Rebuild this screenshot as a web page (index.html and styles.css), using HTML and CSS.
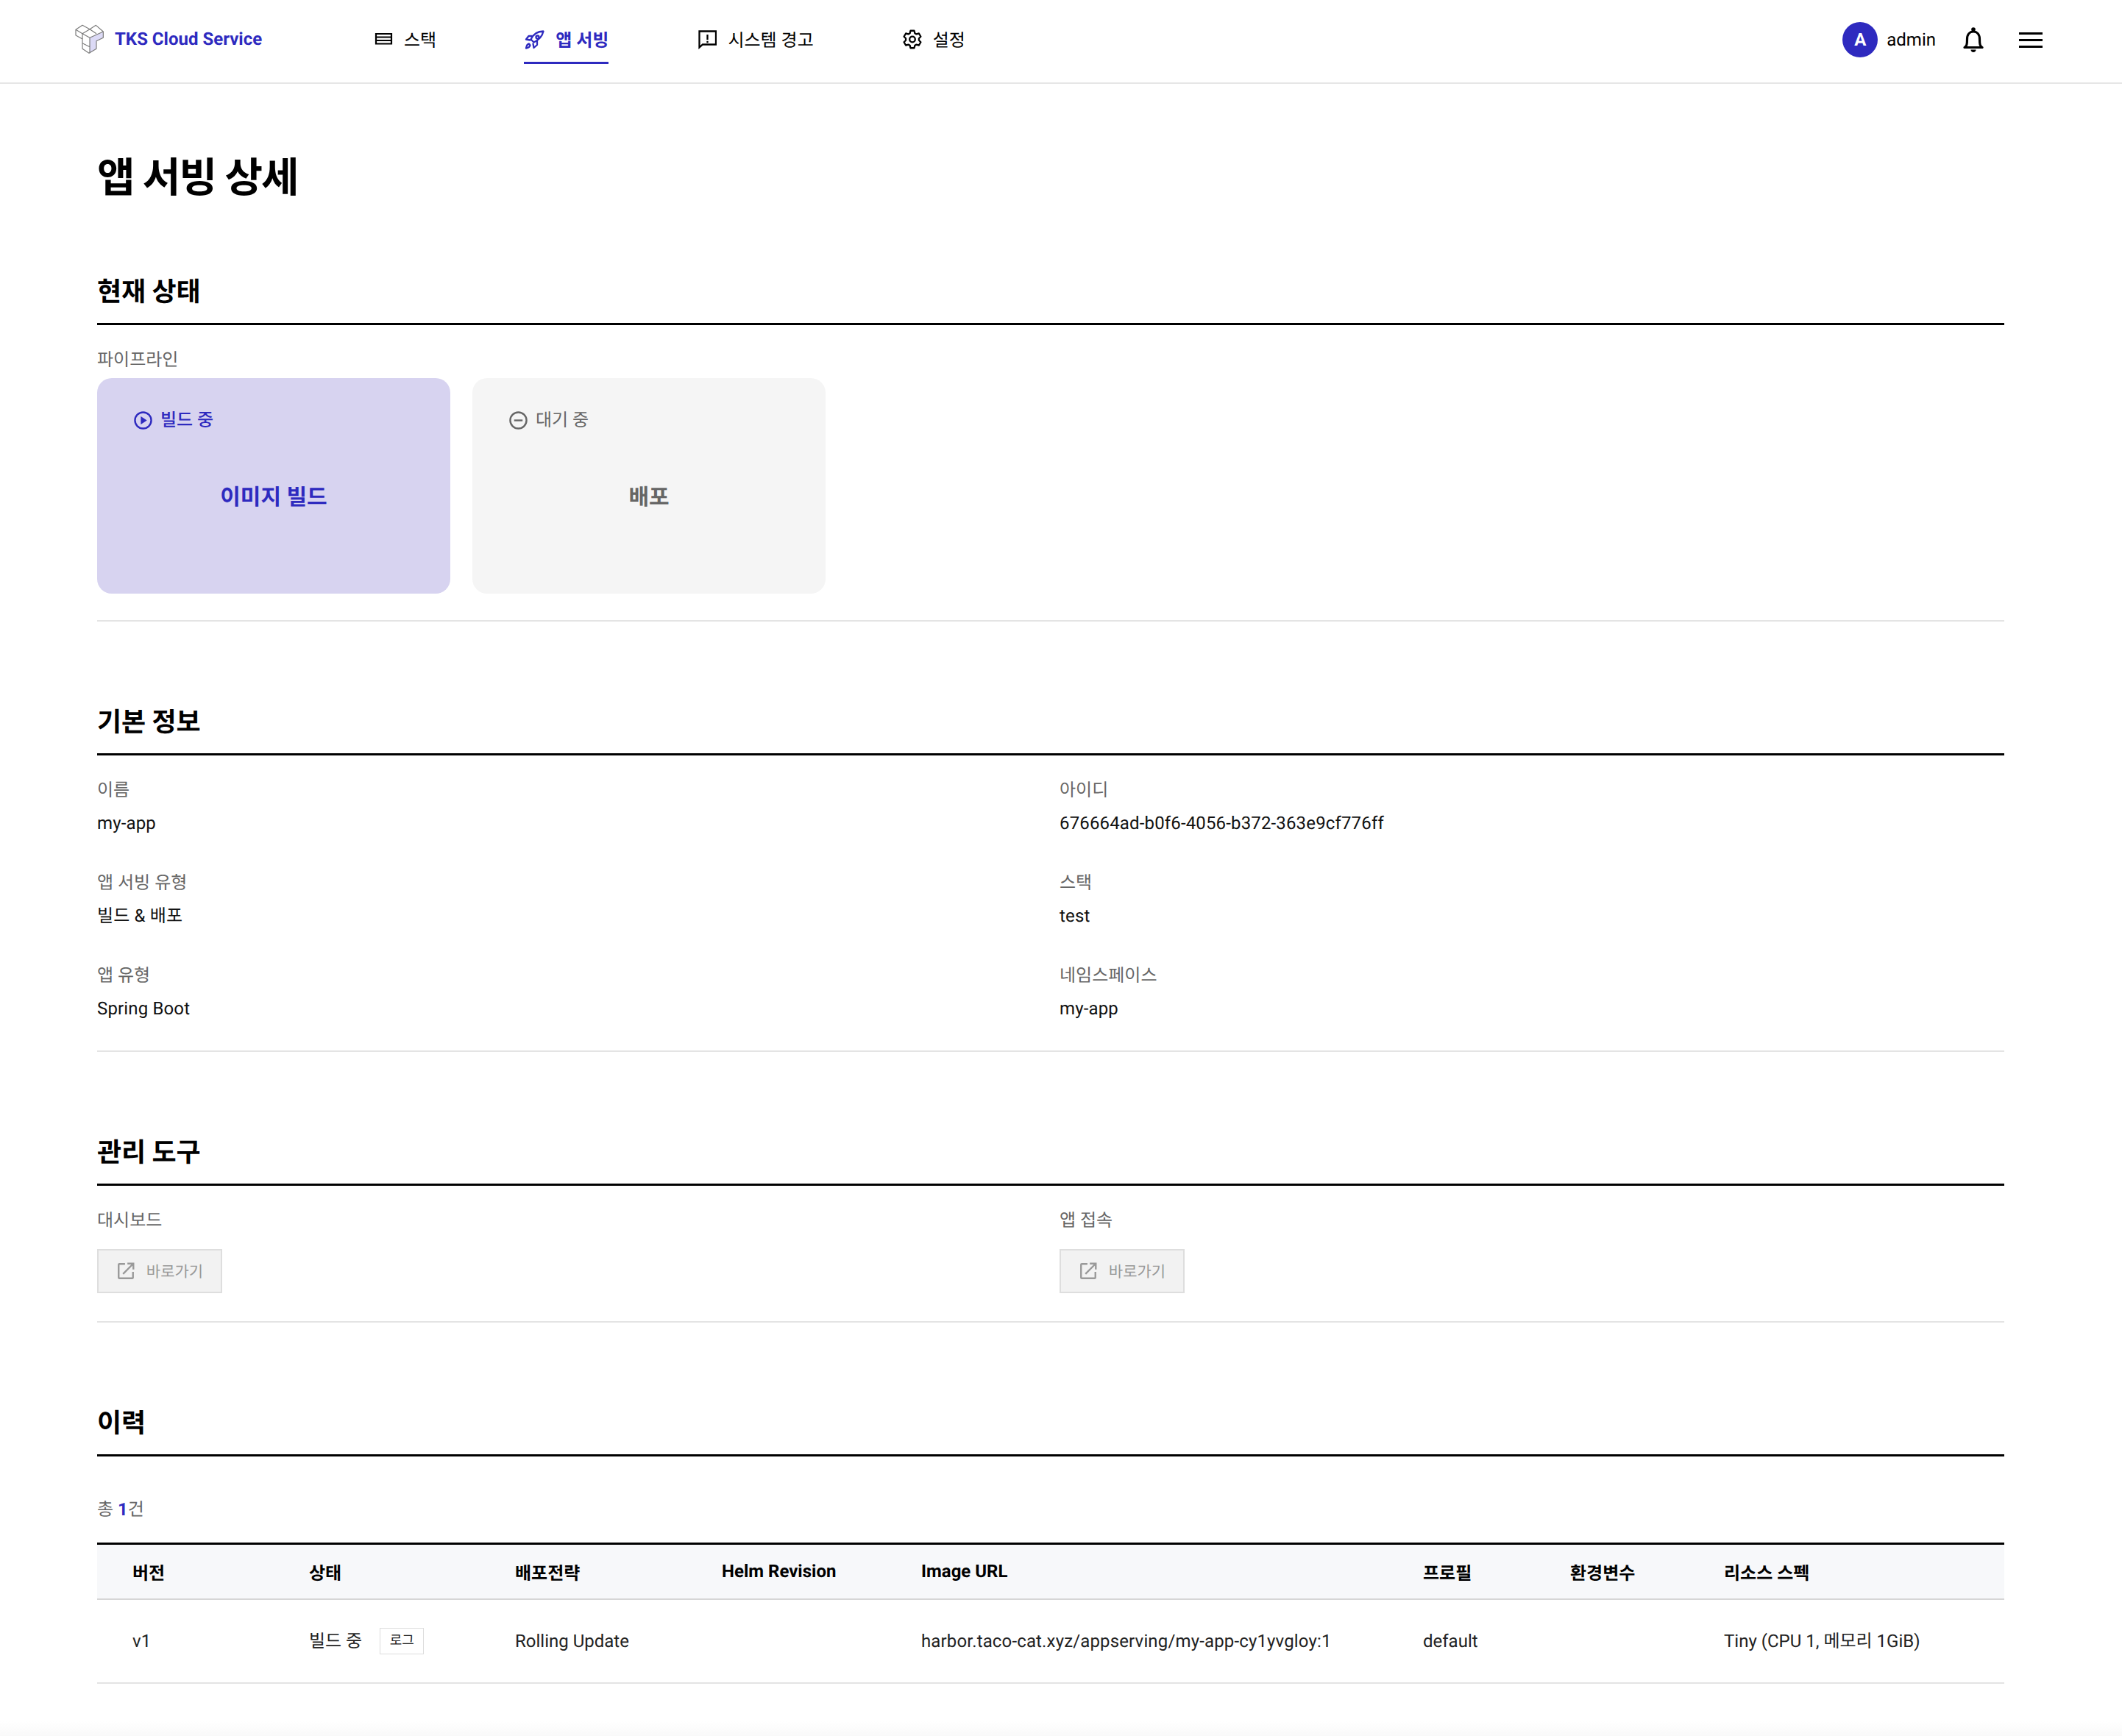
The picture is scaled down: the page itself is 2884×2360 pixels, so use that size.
FILE: index.html
```html
<!DOCTYPE html>
<html lang="ko">
<head>
<meta charset="utf-8">
<title>앱 서빙 상세</title>
<link rel="stylesheet" href="styles.css">
</head>
<body>
<header class="topbar">
  <a class="brand">
    <svg class="brand-icon" viewBox="36 40 118 120" fill="none" stroke="#7a7a7a" stroke-width="3.500" stroke-linejoin="round">
      <path d="M95 95L150 70V95L122 108V140L95 158Z" fill="#dcdaf6" stroke="none"/>
      <path d="M65 44L95 60L120 44L150 70V95L122 108V140L92 158L65 140V100L38 85V62Z"/>
      <path d="M38 62L65 78L95 95L150 70M65 78L95 60L122 78M95 95V158M65 78V100M65 117L95 132"/>
    </svg>
    <span>TKS Cloud Service</span>
  </a>
  <nav class="nav">
    <a class="nav-item">
      <svg class="icon" viewBox="0 0 28 28" fill="none" stroke="currentColor" stroke-width="2.200"><path d="M5 7h21v4.500H5zM5 11.500h21V16H5zM5 16h21v4.500H5z"/></svg>
      <span>스택</span>
    </a>
    <a class="nav-item active">
      <svg class="icon" viewBox="0 0 28 28" fill="none" stroke="currentColor" stroke-width="2.300" stroke-linejoin="round" stroke-linecap="round"><path d="M26.500 3.500C19 3.500 13 7 9.500 14.500l4 4C21 15 25 10 26.500 3.500z"/><path d="M10.500 10H6.500L3 14.500l5.500 1M18 17.500V22l-4.500 4-1-5.500"/><circle cx="18.500" cy="11.500" r="2"/><path d="M7 20.500c-2.500.5-3.500 3-4 6 3-.5 5-1.500 5.500-4z"/></svg>
      <span>앱 서빙</span>
    </a>
    <a class="nav-item">
      <svg class="icon" viewBox="0 0 28 28" fill="none" stroke="currentColor" stroke-width="2.300"><path d="M4.500 3.500H27V21.500H9L4.500 25.500z"/><path d="M15.500 8v7M15.500 16.800v2.500"/></svg>
      <span>시스템 경고</span>
    </a>
    <a class="nav-item">
      <svg class="icon" viewBox="0 0 28 28" fill="none" stroke="currentColor" stroke-width="2.300" stroke-linejoin="round"><path d="M11.630 6.160L12.500 2.760H17.500L18.370 6.160L20.540 7.410L23.920 6.470L26.410 10.790L23.910 13.250V15.750L26.410 18.210L23.920 22.530L20.540 21.590L18.370 22.840L17.500 26.240H12.500L11.630 22.840L9.460 21.590L6.080 22.530L3.590 18.210L6.090 15.750V13.250L3.590 10.790L6.080 6.470L9.460 7.410Z"/><circle cx="15" cy="14.500" r="3.800"/></svg>
      <span>설정</span>
    </a>
  </nav>
  <div class="user">
    <span class="avatar">A</span>
    <span class="user-name">admin</span>
    <svg class="bell" viewBox="0 0 28 36" fill="none" stroke="#000" stroke-width="3.200" stroke-linejoin="round"><path d="M2 28.500c3-2 3.500-4 3.500-11C5.500 11 9 7 14 7s8.500 4 8.500 10.500c0 7 .5 9 3.500 11z"/><circle cx="14" cy="4" r="2.800" fill="#000" stroke="none"/><path d="M10.500 31.500h7c0 2-1.500 3.500-3.500 3.500s-3.500-1.500-3.500-3.500z" fill="#000" stroke="none"/></svg>
    <span class="burger"><i></i><i></i><i></i></span>
  </div>
</header>

<main class="page">
  <h1 class="page-title">앱 서빙 상세</h1>

  <section class="section section-status">
    <h2 class="section-title">현재 상태</h2>
    <div class="section-body body-status">
      <div class="label">파이프라인</div>
      <div class="pipeline">
        <div class="stage stage-active">
          <div class="stage-state">
            <svg class="state-icon" viewBox="0 0 24 24" fill="none" stroke="currentColor" stroke-width="2.300"><circle cx="12" cy="12" r="10.600"/><path d="M9 6.800l8 5.200-8 5.200z" fill="currentColor" stroke="none"/></svg>
            <span>빌드 중</span>
          </div>
          <div class="stage-name">이미지 빌드</div>
        </div>
        <div class="stage stage-wait">
          <div class="stage-state">
            <svg class="state-icon" viewBox="0 0 24 24" fill="none" stroke="currentColor" stroke-width="2.300"><circle cx="12" cy="12" r="10.600"/><path d="M6.500 12h11"/></svg>
            <span>대기 중</span>
          </div>
          <div class="stage-name">배포</div>
        </div>
      </div>
    </div>
  </section>

  <section class="section section-next">
    <h2 class="section-title">기본 정보</h2>
    <div class="section-body info-grid">
      <div class="field"><div class="label">이름</div><div class="value">my-app</div></div>
      <div class="field"><div class="label">아이디</div><div class="value">676664ad-b0f6-4056-b372-363e9cf776ff</div></div>
      <div class="field"><div class="label">앱 서빙 유형</div><div class="value">빌드 &amp; 배포</div></div>
      <div class="field"><div class="label">스택</div><div class="value">test</div></div>
      <div class="field"><div class="label">앱 유형</div><div class="value">Spring Boot</div></div>
      <div class="field"><div class="label">네임스페이스</div><div class="value">my-app</div></div>
    </div>
  </section>

  <section class="section section-next">
    <h2 class="section-title">관리 도구</h2>
    <div class="section-body tools-grid">
      <div class="field">
        <div class="label">대시보드</div>
        <a class="link-btn">
          <svg class="link-icon" viewBox="0 0 24 24" fill="none" stroke="currentColor" stroke-width="2.200"><path d="M11 3H4a1 1 0 0 0-1 1v16a1 1 0 0 0 1 1h16a1 1 0 0 0 1-1v-7M14 2.500h7.500V10M21 3L8.500 15.500"/></svg>
          <span>바로가기</span>
        </a>
      </div>
      <div class="field">
        <div class="label">앱 접속</div>
        <a class="link-btn">
          <svg class="link-icon" viewBox="0 0 24 24" fill="none" stroke="currentColor" stroke-width="2.200"><path d="M11 3H4a1 1 0 0 0-1 1v16a1 1 0 0 0 1 1h16a1 1 0 0 0 1-1v-7M14 2.500h7.500V10M21 3L8.500 15.500"/></svg>
          <span>바로가기</span>
        </a>
      </div>
    </div>
  </section>

  <section class="section section-next">
    <h2 class="section-title">이력</h2>
    <div class="total">총 <b>1</b>건</div>
    <table class="history">
      <colgroup>
        <col class="c1"><col class="c2"><col class="c3"><col class="c4"><col class="c5"><col class="c6"><col class="c7"><col class="c8">
      </colgroup>
      <thead>
        <tr>
          <th>버전</th><th>상태</th><th>배포전략</th><th>Helm Revision</th><th>Image URL</th><th>프로필</th><th>환경변수</th><th>리소스 스펙</th>
        </tr>
      </thead>
      <tbody>
        <tr>
          <td>v1</td>
          <td><span class="status-cell">빌드 중<a class="log-btn">로그</a></span></td>
          <td>Rolling Update</td>
          <td></td>
          <td class="url-cell">harbor.taco-cat.xyz/appserving/my-app-cy1yvgloy:1</td>
          <td>default</td>
          <td></td>
          <td>Tiny (CPU 1, 메모리 1GiB)</td>
        </tr>
      </tbody>
    </table>
  </section>
</main>
<div class="bottom-fade"></div>
</body>
</html>
```
FILE: styles.css
```css
* { box-sizing: border-box; }
html, body { margin: 0; padding: 0; }
body {
  font-family: Roboto, "Noto Sans CJK KR", sans-serif;
  font-size: 24px;
  color: #000;
  background: #fff;
  height: 2360px;
  overflow: hidden;
  text-rendering: geometricPrecision;
}
a { color: inherit; text-decoration: none; }

.topbar {
  height: 114px;
  border-bottom: 2px solid #e6e6e6;
  display: flex;
  align-items: center;
  padding: 0 108px 4px 102px;
}
.brand {
  display: flex;
  align-items: center;
  gap: 14px;
  color: #2e2abf;
  font-weight: 700;
  font-size: 24px;
  width: 404px;
  flex: none;
  padding-bottom: 2px;
}
.brand-icon { width: 40px; height: 40px; flex: none; }
.nav { display: flex; gap: 119px; align-self: flex-start; }
.nav-item {
  display: flex;
  align-items: center;
  gap: 15px;
  height: 87px;
  padding-top: 21px;
  border-bottom: 3px solid transparent;
  font-size: 24px;
}
.nav-item.active {
  color: #2e2abf;
  font-weight: 700;
  border-bottom-color: #2e2abf;
}
.icon { width: 28px; height: 28px; flex: none; }
.user { margin-left: auto; display: flex; align-items: center; }
.avatar {
  width: 48px;
  height: 48px;
  border-radius: 50%;
  background: #2e2abf;
  color: #fff;
  font-weight: 700;
  font-size: 24px;
  display: flex;
  align-items: center;
  justify-content: center;
}
.user-name { margin-left: 12px; font-size: 24px; }
.bell { width: 28px; height: 36px; margin-left: 37px; }
.burger { margin-left: 48px; width: 32px; display: flex; flex-direction: column; gap: 6px; }
.burger i { display: block; height: 3px; background: #000; }

.page { padding: 0 160px 0 132px; }
.page-title {
  margin: 0;
  padding-top: 94px;
  font-size: 56px;
  line-height: 68px;
  font-weight: 700;
  letter-spacing: -1.8px;
}
.section-title {
  margin: 0;
  height: 76px;
  padding-bottom: 20px;
  font-size: 36px;
  line-height: 44px;
  font-weight: 700;
  letter-spacing: -.2px;
  border-bottom: 3px solid #000;
  display: flex;
  align-items: flex-end;
}
.section-status { margin-top: 90px; }
.section-next { margin-top: 106px; }
.section-body { border-bottom: 2px solid #e4e4e4; }
.label { font-size: 24px; line-height: 34px; color: #666; }
.value { font-size: 24px; line-height: 34px; margin-top: 11px; color: #111; letter-spacing: .15px; }

.body-status { padding: 30px 0 36px; }
.pipeline { display: flex; gap: 30px; margin-top: 8px; }
.stage {
  width: 480px;
  height: 293px;
  border-radius: 20px;
  padding: 40px 50px;
}
.stage-active { background: #d7d3f0; color: #2e2abf; }
.stage-wait { background: #f5f5f5; color: #666; }
.stage-active .stage-state { font-weight: 500; }
.stage-state { display: flex; align-items: center; gap: 11px; font-size: 24px; line-height: 34px; }
.state-icon { width: 25px; height: 25px; flex: none; }
.stage-name {
  margin-top: 68px;
  text-align: center;
  font-size: 30px;
  line-height: 42px;
  font-weight: 700;
}

.info-grid {
  display: grid;
  grid-template-columns: 1308px 1fr;
  row-gap: 47px;
  padding: 30px 0 40px;
}
.tools-grid {
  display: grid;
  grid-template-columns: 1308px 1fr;
  padding: 30px 0 38px;
}
.link-btn {
  margin-top: 22px;
  width: 170px;
  height: 60px;
  border: 2px solid #dedede;
  background: #f2f2f2;
  color: #999;
  font-size: 21px;
  display: flex;
  align-items: center;
  justify-content: center;
  gap: 15px;
}
.link-icon { width: 26px; height: 26px; flex: none; }

.total { margin-top: 55px; font-size: 24px; line-height: 34px; color: #666; }
.total b { color: #2e2abf; font-weight: 700; }
.history {
  width: 2592px;
  margin-top: 28px;
  border-collapse: collapse;
  table-layout: fixed;
  border-top: 3px solid #000;
  font-size: 24px;
}
.c1 { width: 240px; }
.c2 { width: 280px; }
.c3 { width: 281px; }
.c4 { width: 271px; }
.c5 { width: 682px; }
.c6 { width: 200px; }
.c7 { width: 209px; }
.c8 { width: 429px; }
.history th {
  height: 75px;
  padding: 0 0 0 48px;
  background: #f7f8fa;
  border-bottom: 2px solid #d6d6d6;
  text-align: left;
  font-weight: 700;
  white-space: nowrap;
}
.history td {
  height: 114px;
  padding: 0 0 0 48px;
  border-bottom: 2px solid #e4e4e4;
  color: #222;
  white-space: nowrap;
  line-height: 34px;
}
.history .url-cell { letter-spacing: .15px; }
.status-cell { display: inline-flex; align-items: center; gap: 24px; }
.log-btn {
  width: 60px;
  height: 36px;
  border: 1px solid #dcdcdc;
  background: #fff;
  font-size: 18px;
  display: flex;
  align-items: center;
  justify-content: center;
  color: #222;
}
.bottom-fade {
  position: fixed;
  left: 0;
  right: 0;
  bottom: 0;
  height: 20px;
  background: linear-gradient(#fff, #f9f9f9);
}
```
